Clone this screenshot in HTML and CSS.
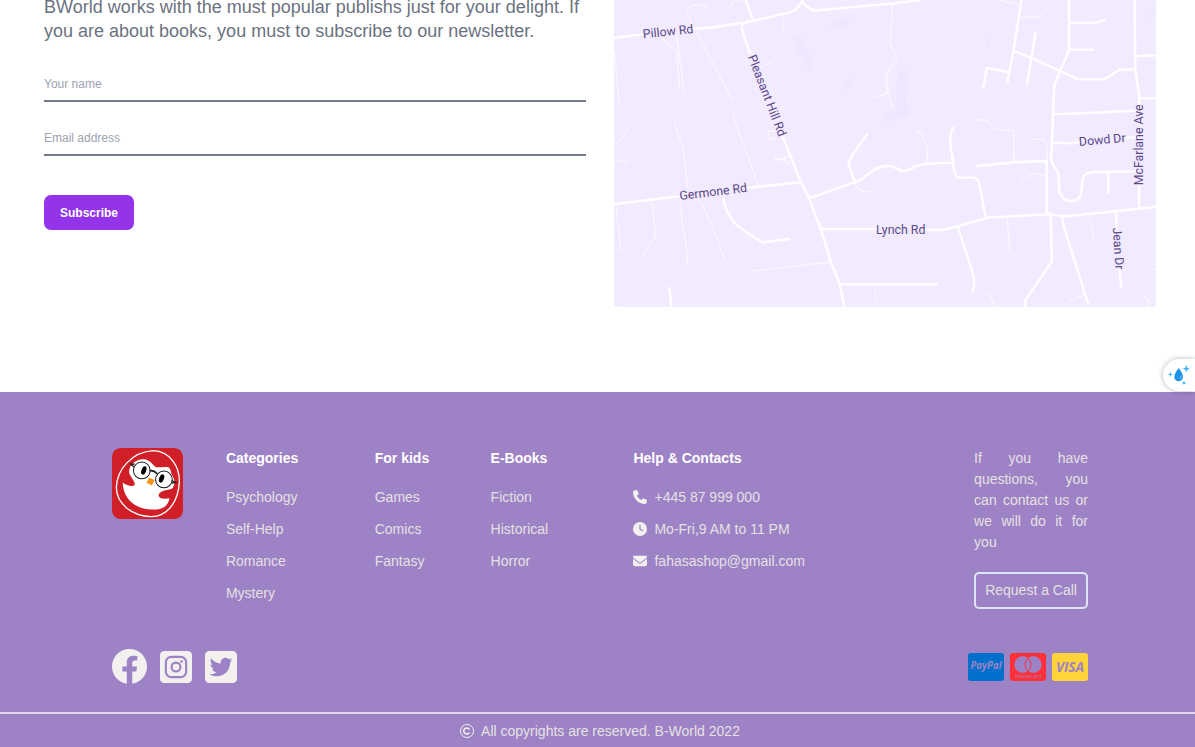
FILE: index.html
```html
<!DOCTYPE html>
<html lang="en">
<head>
<meta charset="utf-8">
<meta name="viewport" content="width=device-width, initial-scale=1">
<title>B-World</title>
<link rel="stylesheet" href="styles.css">
</head>
<body>
<main class="contact">
  <section class="newsletter">
    <p class="intro">BWorld works with the must popular publishs just for your delight. If you are about books, you must to subscribe to our newsletter.</p>
    <form class="form">
      <input class="field" type="text" placeholder="Your name" aria-label="Your name">
      <input class="field" type="email" placeholder="Email address" aria-label="Email address">
      <button class="subscribe" type="button">Subscribe</button>
    </form>
  </section>
  <svg class="map" viewBox="0 0 1626 921" preserveAspectRatio="xMidYMid slice" role="img" aria-label="Map of the shop area">
    <g class="patch">
      <path d="M650 75L690 52L712 58L702 74L660 83ZM542 110L556 108L568 140L590 165L592 205L580 210L568 180L550 155ZM682 270L700 240L720 236L712 252ZM852 215L880 208V270L874 315L894 320L880 350L820 362L814 345L848 320ZM1114 138L1124 108L1130 116L1126 134ZM1602 50L1620 22H1626V40Z"/>
    </g>
    <g class="lane">
      <g transform="translate(-12 0)">
        <path d="M240 75Q248 60 228 38Q228 14 275 14L292 26M360 20Q365 0 405 3M520 45L517 93M450 203L490 185M260 95L365 300M158 110Q164 135 190 142Q202 148 203 180L209 263M200 105L224 283M13 155L27 305M12 432Q45 415 54 386M192 370Q222 440 224 480L232 560M368 330Q375 370 390 405L446 558M500 392L478 394Q466 412 484 418L498 414M495 478L520 480L538 466M795 293L840 276M840 208Q820 230 836 276"/>
      </g>
      <g transform="translate(798 0)">
        <path d="M38 10L30 130L50 174L20 220Q14 250 24 276L39 328M0 288L26 276M358 0L416 14M420 51H478L486 43M290 360H318Q332 370 340 384Q350 390 400 390Q404 400 402 480V490M108 397H126L140 440L142 490M456 418H488Q503 425 502 480V490"/>
      </g>
      <g transform="translate(-12 465)">
        <path d="M13 15L55 22M18 150L32 278L24 286M126 140L136 244L98 300M213 140L215 200L227 260L233 332M270 140Q310 210 342 310M425 348L660 321M733 80Q746 118 786 109M795 390Q795 430 804 448M494 8L510 15L525 8M530 5Q515 20 540 24"/>
      </g>
      <g transform="translate(798 465)">
        <path d="M142 0V25M400 0V20M426 74L464 56L494 62M382 190L389 292M625 178L640 240L638 255M328 415L344 456M612 418L576 438L568 428M792 425L806 434V456M810 346L828 342"/>
      </g>
    </g>
    <g class="road">
      <g transform="translate(-12 0)">
        <path d="M0 115L100 103M252 86L300 83L415 66L540 37Q570 26 575 3M575 3Q592 25 614 32L850 10L930 1M407 0L428 58M415 62Q392 70 396 90L420 160M518 410L570 540L597 595L632 685L662 785L688 850L704 925M771 403L730 460L715 487L730 535L738 545"/>
      </g>
      <g transform="translate(798 0)">
        <path d="M424 0L400 155L382 248M384 216L320 204L310 262M466 100L454 178L441 252M400 153L455 174L594 238H670Q690 230 716 210L766 207M567 0V150L540 215Q520 250 521 290L514 480M567 69L648 68L676 59M566 149H638M764 0L766 207L778 290L777 330M766 168L828 166M780 295H828M522 343L777 332M520 428L575 430L600 426M740 413L775 412M221 383Q206 400 212 440L220 490"/>
      </g>
      <g transform="translate(-12 465)">
        <path d="M0 149L207 124M413 98L570 82M340 130Q348 178 378 208Q410 234 458 262L538 252M597 130L752 75Q790 44 810 35L825 34M632 222H800M688 388H982M178 398L184 460"/>
      </g>
      <g transform="translate(798 465)">
        <path d="M0 38Q30 25 65 48Q80 50 105 35Q130 24 220 23M217 0Q220 68 238 68H278Q298 68 300 96L317 188M292 33L410 21L500 18M512 0Q510 20 535 55L538 110Q548 139 575 138Q602 137 604 110L608 70Q614 52 640 51L765 49M685 50V116M500 18V170L512 178L515 320L436 436V460M137 225H190L330 187L505 178L555 184L828 156M234 216L280 360Q286 390 278 410M547 184L550 210L624 445M777 90V158M709 168V220M718 345L724 398"/>
      </g>
    </g>
    <g class="street">
      <text transform="translate(88 115) rotate(-6)">Pillow Rd</text>
      <text transform="translate(401 170) rotate(69)">Pleasant Hill Rd</text>
      <text transform="translate(198 600) rotate(-7)">Germone Rd</text>
      <text x="786" y="703">Lynch Rd</text>
      <text transform="translate(1396 438) rotate(-5)">Dowd Dr</text>
      <text transform="translate(1588 556) rotate(-90)">McFarlane Ave</text>
      <text transform="translate(1496 683) rotate(86)">Jean Dr</text>
    </g>
  </svg>
</main>

<footer class="footer">
  <div class="columns">
    <svg class="logo" viewBox="0 0 212 212" role="img" aria-label="B-World">
      <rect width="212" height="212" rx="26" fill="#d01f27"/>
      <path d="M123 8C173 10 203 55 201 104C198 154 171 204 117 205C61 203 14 168 13 119C14 62 61 12 123 8Z" fill="none" stroke="#fff" stroke-width="4"/>
      <path d="M58 50C72 36 90 31 103 35C116 40 121 49 130 57C142 59 155 55 167 57C177 62 174 72 181 84C188 96 189 108 180 121C165 127 141 127 139 141C139 151 157 153 172 150C166 176 148 184 126 184C73 184 34 157 32 103C43 112 60 116 67 111C72 105 57 88 52 77C50 68 52 58 58 50Z" fill="#fff"/>
      <g fill="none" stroke="#171717" stroke-width="3">
        <circle cx="89" cy="67" r="25"/><circle cx="155" cy="94" r="25"/>
        <path d="M112 68Q124 65 135 77" stroke-width="5"/>
        <path d="M65 56L56 48L68 48M178 97L190 103L178 105" stroke-width="4"/>
      </g>
      <ellipse cx="95" cy="67" rx="7" ry="13" transform="rotate(20 95 67)"/>
      <ellipse cx="148" cy="91" rx="7" ry="13" transform="rotate(20 148 91)"/>
      <path d="M111 88L127 96L119 112L103 104Z" fill="#f7941d"/>
    </svg>
    <nav class="column" aria-label="Categories">
      <h2 class="title">Categories</h2>
      <ul class="list">
        <li><a class="link" href="#">Psychology</a></li>
        <li><a class="link" href="#">Self-Help</a></li>
        <li><a class="link" href="#">Romance</a></li>
        <li><a class="link" href="#">Mystery</a></li>
      </ul>
    </nav>
    <nav class="column" aria-label="For kids">
      <h2 class="title">For kids</h2>
      <ul class="list">
        <li><a class="link" href="#">Games</a></li>
        <li><a class="link" href="#">Comics</a></li>
        <li><a class="link" href="#">Fantasy</a></li>
      </ul>
    </nav>
    <nav class="column" aria-label="E-Books">
      <h2 class="title">E-Books</h2>
      <ul class="list">
        <li><a class="link" href="#">Fiction</a></li>
        <li><a class="link" href="#">Historical</a></li>
        <li><a class="link" href="#">Horror</a></li>
      </ul>
    </nav>
    <section class="column">
      <h2 class="title">Help &amp; Contacts</h2>
      <ul class="list">
        <li class="entry"><svg class="glyph" viewBox="0 0 512 512" aria-hidden="true"><path transform="matrix(-1 0 0 1 512 0) rotate(90 256 256)" d="M0 0"/><path d="M164.900 24.600c-7.700-18.600-28-28.500-47.400-23.200l-88 24C12.100 30.200 0 46 0 64C0 311.400 200.600 512 448 512c18 0 33.800-12.100 38.600-29.500l24-88c5.300-19.400-4.600-39.700-23.200-47.400l-96-40c-16.300-6.800-35.200-2.100-46.300 11.600L304.700 368C234.300 334.700 177.300 277.700 144 207.300L193.300 167c13.700-11.200 18.400-30 11.600-46.300l-40-96z"/></svg>+445 87 999 000</li>
        <li class="entry"><svg class="glyph" viewBox="0 0 512 512" aria-hidden="true"><path fill-rule="evenodd" d="M256 0a256 256 0 1 1 0 512A256 256 0 1 1 256 0zM232 120V256c0 8 4 15.500 10.700 20l96 64c11 7.400 25.900 4.400 33.300-6.700s4.400-25.900-6.700-33.300L280 243.200V120c0-13.300-10.700-24-24-24s-24 10.700-24 24z"/></svg>Mo-Fri,9 AM to 11 PM</li>
        <li class="entry"><svg class="glyph" viewBox="0 0 512 512" aria-hidden="true"><path d="M48 64C21.500 64 0 85.500 0 112c0 15.100 7.100 29.300 19.200 38.400L236.800 313.600c11.400 8.500 27 8.500 38.400 0L492.800 150.400c12.100-9.100 19.200-23.300 19.200-38.400c0-26.500-21.500-48-48-48H48zM0 176V384c0 35.300 28.700 64 64 64H448c35.300 0 64-28.700 64-64V176L294.400 339.200c-22.800 17.100-54 17.100-76.800 0L0 176z"/></svg>fahasashop@gmail.com</li>
      </ul>
    </section>
    <section class="call">
      <p class="question">If you have questions, you can contact us or we will do it for you</p>
      <button class="request" type="button">Request a Call</button>
    </section>
  </div>

  <div class="badges">
    <div class="social">
      <a class="social-link" href="#" aria-label="Facebook"><svg class="facebook" viewBox="8 8 496 496"><path d="M504 256C504 119 393 8 256 8S8 119 8 256c0 123.780 90.690 226.380 209.250 245V327.690h-63V256h63v-54.640c0-62.150 37-96.480 93.670-96.480 27.140 0 55.520 4.840 55.520 4.840v61h-31.280c-30.800 0-40.410 19.120-40.410 38.730V256h68.780l-11 71.690h-57.780V501C413.310 482.380 504 379.780 504 256z"/></svg></a>
      <a class="social-link" href="#" aria-label="Instagram"><svg class="square" viewBox="0 0 448 448"><rect width="448" height="448" rx="60"/><g fill="none" stroke="#9d82c5" stroke-width="30"><rect x="82" y="82" width="284" height="284" rx="74"/><circle cx="224" cy="224" r="62"/></g><circle cx="301" cy="148" r="18" fill="#9d82c5"/></svg></a>
      <a class="social-link" href="#" aria-label="Twitter"><svg class="square" viewBox="0 32 448 448"><path d="M388 32H60C27 32 0 59 0 92v328c0 33 27 60 60 60h328c33 0 60-27 60-60V92c0-33-27-60-60-60zm-36.900 158.800c.2 2.800.2 5.700.2 8.500 0 86.700-66 186.600-186.600 186.600-37.200 0-71.700-10.800-100.700-29.400 5.300.6 10.400.8 15.800.8 30.700 0 58.900-10.400 81.400-28-28.800-.6-53-19.500-61.300-45.500 10.100 1.500 19.200 1.500 29.600-1.200-30-6.100-52.500-32.500-52.500-64.400v-.8c8.700 4.900 18.900 7.900 29.600 8.300a65.400 65.400 0 0 1-29.200-54.600c0-12.200 3.200-23.400 8.900-33.100 32.300 39.800 80.800 65.800 135.200 68.600-9.300-44.500 24-80.600 64-80.600 18.900 0 35.900 7.900 47.900 20.700 14.800-2.800 29-8.300 41.600-15.800-4.900 15.200-15.200 28-28.800 36.100 13.200-1.400 26-5.100 37.800-10.200-8.900 13.100-20.100 24.700-32.900 34z"/></svg></a>
    </div>
    <div class="payments">
      <svg class="card" viewBox="0 0 108 84" role="img" aria-label="PayPal"><rect width="108" height="84" rx="9" fill="#0070cc"/><text class="brand" x="54" y="49" font-size="29">PayPal</text></svg>
      <svg class="card" viewBox="0 0 108 84" role="img" aria-label="Mastercard"><rect width="108" height="84" rx="9" fill="#ff3038"/><g fill="#9d82c5"><circle cx="38" cy="35" r="25"/><circle cx="70" cy="35" r="25"/></g><path d="M54 16C66 27 66 43 54 54C42 43 42 27 54 16Z" fill="#9d82c5" stroke="#ff3038" stroke-width="3"/><text class="brand-small" x="54" y="75" font-size="15">mastercard</text></svg>
      <svg class="card" viewBox="0 0 108 84" role="img" aria-label="Visa"><rect width="108" height="84" rx="9" fill="#ffd43b"/><text class="brand" x="54" y="57" font-size="41">VISA</text></svg>
    </div>
  </div>

  <div class="copyright">
    <svg class="glyph" viewBox="0 0 28 28" aria-hidden="true"><g fill="none" stroke="#f3f1f0" stroke-width="2"><circle cx="14" cy="14" r="13"/><path d="M18 10A6 6 0 1 0 18 18" stroke-width="3" stroke-linecap="round"/></g></svg>
    <span>All copyrights are reserved. B-World 2022</span>
  </div>
</footer>

<button class="drop" type="button" aria-label="Open colour helper">
  <svg class="drop-icon" viewBox="0 0 66 60" aria-hidden="true"><path d="M32 9C41 21 45 29 45 36A13 13 0 0 1 19 36C19 29 24 20 32 9Z" fill="#1d93e8"/><path d="M35 42Q40 39 39 32" fill="none" stroke="#8fd0fa" stroke-width="3"/><g fill="#38b6f5"><path d="M55 0L58 8L66 11L58 14L55 22L52 14L44 11L52 8Z"/><path d="M7 20L9 26L15 28L9 30L7 36L5 30L0 28L5 26Z"/><path d="M48 47L50 52L54 54L50 56L48 60L46 56L42 54L46 52Z"/></g></svg>
</button>
</body>
</html>
```
FILE: styles.css
```css
* {
  box-sizing: border-box;
}

body {
  margin: 0;
  position: relative;
  background: #fff;
  font-family: "Liberation Sans", Arial, sans-serif;
  font-size: 14px;
  overflow-x: hidden;
}

button,
input {
  font-family: inherit;
}

.contact {
  display: grid;
  grid-template-columns: 1fr 1fr;
  align-items: start;
  gap: 28px;
  padding: 0 39px 85px 44px;
}

.newsletter {
  margin-top: -5px;
}

.intro {
  margin: 0 0 23px;
  color: #6b7280;
  font-size: 18px;
  line-height: 24px;
}

.form {
  display: flex;
  flex-direction: column;
  align-items: flex-start;
  gap: 18px;
}

.field {
  width: 100%;
  height: 36px;
  padding: 2px 0 0;
  border: 0;
  border-bottom: 2px solid #747b8a;
  background: transparent;
  color: #6b7280;
  font-size: 12px;
}

.field::placeholder {
  color: #9ca3af;
  opacity: 1;
}

.subscribe {
  height: 35px;
  margin-top: 21px;
  padding: 0 16px;
  border: 0;
  border-radius: 7px;
  background: #9333ea;
  color: #fff;
  font-size: 12px;
  font-weight: 700;
}

.map {
  display: block;
  width: 100%;
  border-radius: 0 0 4px 4px;
  background: #f2ebff;
}

.patch {
  fill: #eee7fd;
}

.lane,
.road {
  fill: none;
  stroke: #fff;
  stroke-linecap: round;
  stroke-linejoin: round;
}

.lane {
  stroke-width: 4;
  stroke: #faf7ff;
}

.road {
  stroke-width: 7;
}

.street {
  fill: #5a4888;
  font-family: Roboto, sans-serif;
  font-size: 37px;
}

.footer {
  background: #9d82c5;
  color: #e5e1e3;
}

.columns {
  display: grid;
  grid-template-columns: 114fr 149fr 116fr 143fr 341fr 114fr;
  align-items: start;
  padding: 56px 107px 0 112px;
}

.logo {
  width: 71px;
}

.title {
  margin: 0 0 18px;
  color: #fff;
  font-size: 14px;
  line-height: 20px;
}

.list {
  display: flex;
  flex-direction: column;
  gap: 10px;
  margin: 0;
  padding: 0;
  list-style: none;
  line-height: 22px;
}

.link {
  color: inherit;
  text-decoration: none;
}

.entry {
  display: flex;
  align-items: center;
  gap: 7px;
}

.glyph {
  flex: none;
  width: 14px;
  height: 14px;
  fill: #f3f1f0;
}

.question {
  margin: 0 0 19px;
  line-height: 21px;
  text-align: justify;
}

.request {
  width: 100%;
  height: 37px;
  padding: 0 0 2px;
  border: 2px solid #dfe3f8;
  border-radius: 5px;
  background: transparent;
  color: inherit;
  font-size: 14px;
  white-space: nowrap;
}

.badges {
  display: flex;
  align-items: center;
  justify-content: space-between;
  padding: 40px 107px 28px 112px;
}

.social,
.payments {
  display: flex;
  align-items: center;
}

.social {
  gap: 13px;
  fill: #f3f1f0;
}

.social-link {
  display: flex;
}

.facebook {
  width: 35px;
  height: 35px;
}

.square {
  width: 32px;
  height: 32px;
}

.payments {
  gap: 6px;
}

.card {
  width: 36px;
  height: 28px;
}

.brand,
.brand-small {
  fill: #9d82c5;
  font-family: "Open Sans", sans-serif;
  text-anchor: middle;
}

.brand {
  font-style: italic;
  font-weight: 700;
}

.copyright {
  display: flex;
  align-items: center;
  justify-content: center;
  gap: 7px;
  padding: 6px 0 5px 5px;
  border-top: 2px solid #dfd8ec;
  line-height: 22px;
}

.drop {
  position: absolute;
  top: 359px;
  right: 0;
  width: 32px;
  height: 32px;
  padding: 0 0 0 5px;
  border: 0;
  border-radius: 16px 0 0 16px;
  background: #fff;
  box-shadow: 0 0 5px rgba(0, 0, 0, 0.3);
}

.drop-icon {
  display: block;
  width: 22px;
}
```
